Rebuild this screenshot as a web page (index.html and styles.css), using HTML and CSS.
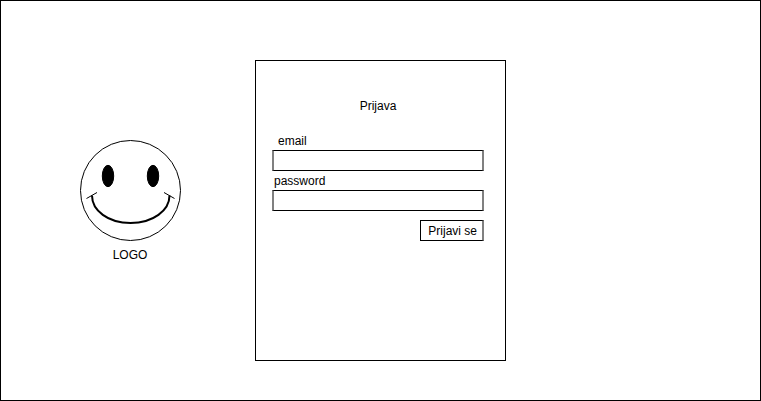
FILE: index.html
```html
<!DOCTYPE html>
<html lang="hr">
<head>
<meta charset="utf-8">
<meta name="viewport" content="width=device-width, initial-scale=1">
<title>Prijava</title>
<link rel="stylesheet" href="styles.css">
</head>
<body>
<main class="page">
  <div class="brand">
    <svg class="brand-face" viewBox="0 0 101 101" fill="none" stroke="#000" aria-hidden="true">
      <circle cx="50.5" cy="50.5" r="50"/>
      <ellipse cx="28" cy="36" rx="5.7" ry="10.7" fill="#000"/>
      <ellipse cx="73" cy="36" rx="5.7" ry="10.7" fill="#000"/>
      <path d="M12 55.5C12 70.5 28 83 50.5 83S89.500 70.500 89.500 55.500" stroke-width="2"/>
      <path d="M6.500 58.500L17 52.500M84 52.500L94.500 58.500"/>
    </svg>
    <span class="brand-name">LOGO</span>
  </div>
  <form class="card">
    <h1 class="title">Prijava</h1>
    <label class="label label-email" for="email">email</label>
    <input class="field" id="email" type="email">
    <label class="label" for="password">password</label>
    <input class="field" id="password" type="password">
    <button class="submit" type="button">Prijavi se</button>
  </form>
</main>
</body>
</html>
```
FILE: styles.css
```css
* {
  box-sizing: border-box;
}

body {
  margin: 0;
  background: #fff;
  color: #000;
  font: 12px/20px "Liberation Sans", Arial, sans-serif;
}

.page {
  display: grid;
  grid-template-columns: 1fr minmax(0, 251px) 1fr;
  align-items: start;
  min-height: 100vh;
  padding: 59px 0 39px;
  border: 1px solid #000;
}

.brand {
  display: flex;
  flex-direction: column;
  align-items: center;
  justify-self: center;
  gap: 4px;
  padding: 80px 0 0 4px;
}

.brand-face {
  width: 101px;
  height: 101px;
}

.card {
  display: flex;
  flex-direction: column;
  min-height: 301px;
  padding: 35px 21px 20px 16px;
  border: 1px solid #000;
}

.title {
  margin: 0 0 15px;
  font-size: 12px;
  font-weight: 400;
  text-align: center;
}

.label {
  padding: 1px 0 0 2px;
  line-height: 18px;
}

.label-email {
  padding-left: 6px;
}

.field {
  width: 100%;
  height: 21px;
  padding: 0 4px;
  border: 1px solid #000;
  border-inline: 2px solid #808080;
  border-radius: 0;
  background: #fff;
  font: inherit;
}

.submit {
  align-self: flex-end;
  height: 21px;
  margin-top: 9px;
  padding: 1px 5px 0 7px;
  border: 1px solid #000;
  border-right: 2px solid #808080;
  background: #fff;
  color: inherit;
  font: inherit;
  line-height: 18px;
}
```
